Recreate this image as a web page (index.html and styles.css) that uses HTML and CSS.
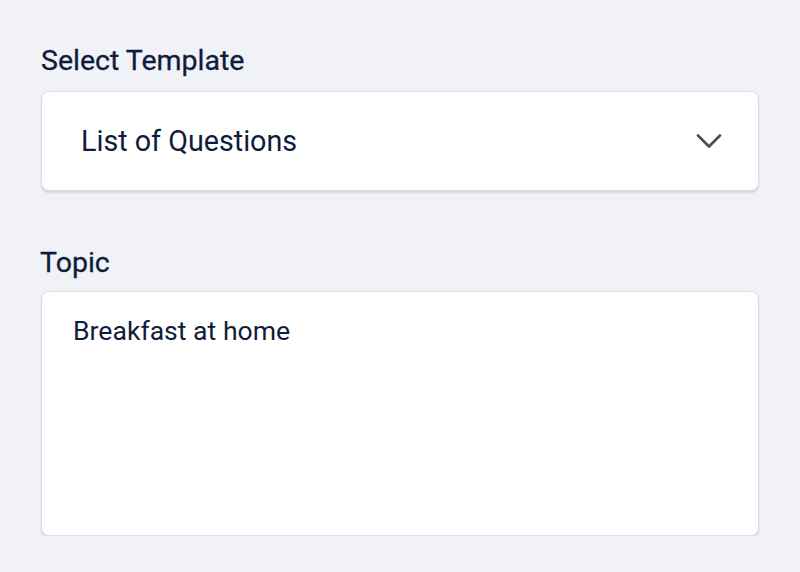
FILE: index.html
```html
<!DOCTYPE html>
<html lang="en">
<head>
  <meta charset="UTF-8">
  <meta name="viewport" content="width=device-width, initial-scale=1.0">
  <title>Template form</title>
  <link rel="stylesheet" href="styles.css">
</head>
<body>
  <div class="form">
    <!-- template -->
    <div class="field">
      <label class="label">Select Template</label>
      <div class="select">
        <span class="select-value">List of Questions</span>
        <svg class="chevron" width="26" height="15" viewBox="0 0 26 15">
          <path d="M2 1.5 L13 12.5 L24 1.5" fill="none" stroke="#4b4e57" stroke-width="2.6" stroke-linecap="round" stroke-linejoin="round"/>
        </svg>
      </div>
    </div>
    <!-- topic -->
    <div class="field">
      <label class="label label-topic">Topic</label>
      <textarea class="topic">Breakfast at home</textarea>
    </div>
  </div>
</body>
</html>
```

FILE: styles.css
```css
body {
  margin: 0;
  padding: 0;
  background: #f1f2f7;
  font-family: Roboto, "Noto Sans", sans-serif;
  color: #101c3c;
}
.form {
  padding: 44px 41px 0 41px;
  display: flex;
  flex-direction: column;
  gap: 55px;
}
.field {
  display: flex;
  flex-direction: column;
  gap: 13px;
}
.label {
  font-size: 28.5px;
  font-weight: 400;
  line-height: 34px;
  color: #101c3c;
  -webkit-text-stroke: 0.3px #101c3c;
}
.label-topic {
  margin: 0 0 -2px -1px;
}
.select {
  height: 100px;
  box-sizing: border-box;
  background: #fff;
  border: 1.5px solid #dcdee5;
  border-radius: 8px;
  box-shadow: 0 2px 2px rgba(20, 30, 60, 0.12);
  display: flex;
  align-items: center;
  justify-content: space-between;
  padding: 0 36px 0 39px;
}
.select-value {
  font-size: 28.7px;
}
.topic {
  display: block;
  height: 245px;
  box-sizing: border-box;
  background: #fff;
  border: 1.5px solid #dcdee5;
  border-radius: 8px;
  box-shadow: 0 2px 2px rgba(20, 30, 60, 0.12);
  padding: 23px 31px;
  font-family: Roboto, "Noto Sans", sans-serif;
  font-size: 26.6px;
  color: #101c3c;
  resize: none;
  outline: none;
}
```
